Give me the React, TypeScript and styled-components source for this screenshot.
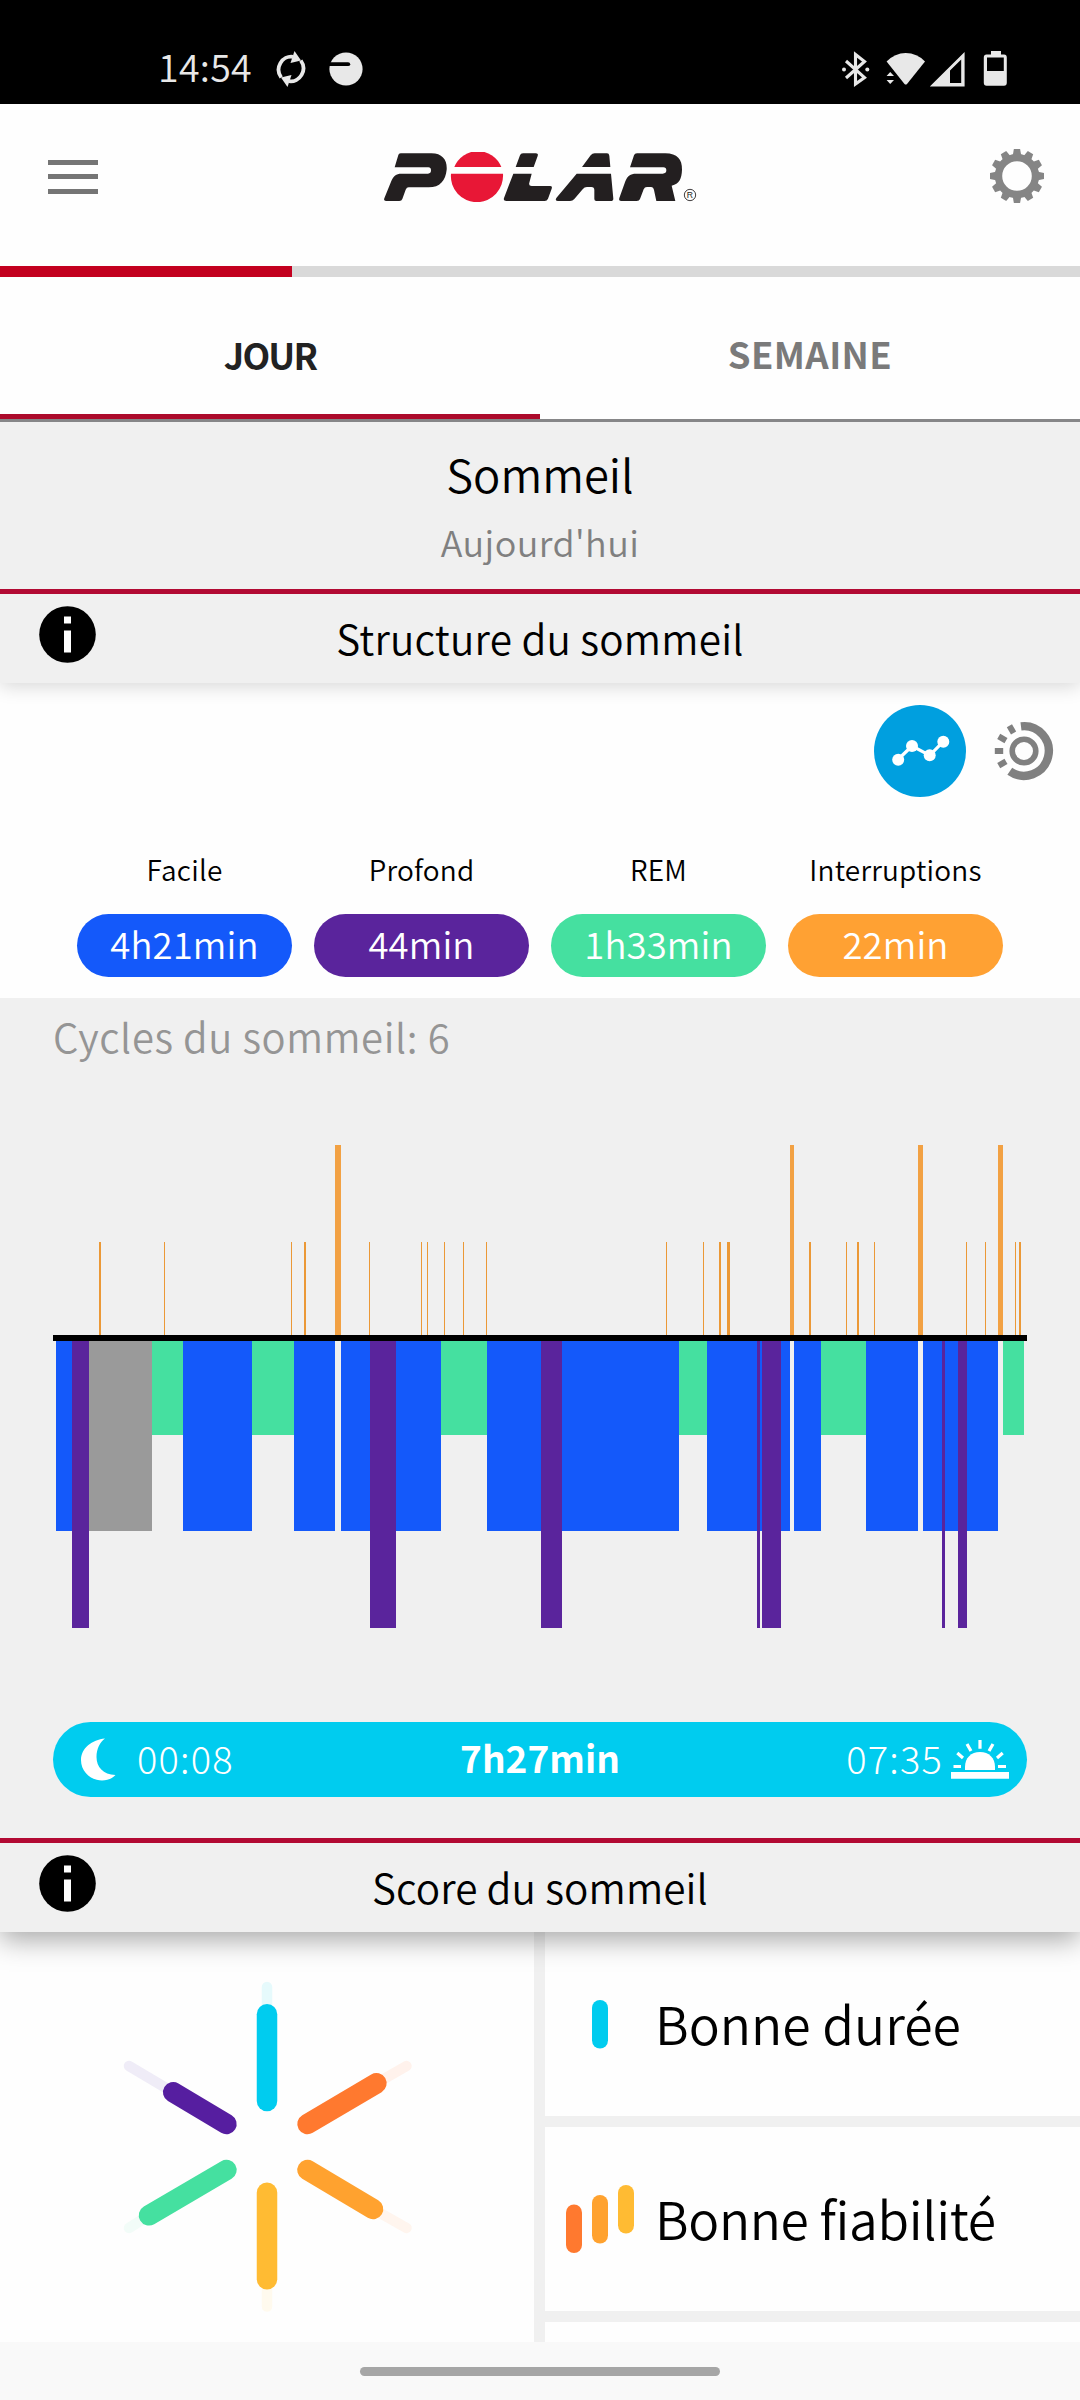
import React from "react";
import styled, { createGlobalStyle } from "styled-components";

const C = {
  blue: "#1459fa",
  purple: "#5a249c",
  green: "#45e0a0",
  orange: "#ffa133",
  amber: "#ffa22f",
  yellow: "#ffbb33",
  coral: "#ff792f",
  cyan: "#00ccef",
  gray: "#9a9a9a",
  panel: "#f0f0f0",
  crimson: "#b20a33",
};

const Global = createGlobalStyle`
  html, body { margin: 0; background: #fff; }
  body, button { font-family: "Noto Sans CJK JP", "Noto Sans CJK SC", "Noto Sans", sans-serif; }
  * { box-sizing: border-box; }
`;

const Screen = styled.div`
  width: 1080px;
  height: 2400px;
  overflow: hidden;
  display: flex;
  flex-direction: column;
  background: #fefefe;
  color: #000;
`;

const Txt = styled.span<{ $size: number; $color?: string; $weight?: number; $spacing?: number }>`
  font-size: ${(p) => p.$size}px;
  line-height: 1;
  color: ${(p) => p.$color ?? "#000"};
  font-weight: ${(p) => p.$weight ?? 350};
  letter-spacing: ${(p) => (p.$spacing ? `${p.$spacing}px` : "normal")};
  white-space: nowrap;
`;

const StatusBar = styled.header`
  height: 104px;
  flex: none;
  background: #000;
  display: flex;
  align-items: flex-start;
  justify-content: space-between;
  padding: 47px 70px 0 158px;
`;

const StatusGroup = styled.div`
  display: flex;
  align-items: center;
  height: 44px;
`;

const Clock = styled.div`
  width: 95px;
  display: flex;
  padding-bottom: 6px;
`;

const TopBar = styled.div`
  height: 162px;
  flex: none;
  display: flex;
  align-items: center;
  justify-content: space-between;
  padding: 0 36px 18px 48px;
`;

const MenuButton = styled.button`
  width: 50px;
  height: 34px;
  margin-top: 1px;
  padding: 0;
  border: 0;
  background: none;
  display: flex;
  flex-direction: column;
  justify-content: space-between;
`;

const MenuLine = styled.span`
  width: 100%;
  height: 5px;
  background: #757575;
`;

const Progress = styled.div`
  height: 11px;
  flex: none;
  background: #d9d9d9;
`;

const ProgressFill = styled.div`
  width: 292px;
  height: 100%;
  background: #c3001f;
`;

const Tabs = styled.nav`
  height: 145px;
  flex: none;
  display: grid;
  grid-template-columns: 1fr 1fr;
  border-bottom: 3px solid #868688;
`;

const Tab = styled.button<{ $active?: boolean }>`
  border: 0;
  border-bottom: 5px solid ${(p) => (p.$active ? "#ac0a2b" : "transparent")};
  background: none;
  padding: 18px 0 0;
  display: flex;
  justify-content: center;
`;

const TabInner = styled.div`
  height: 118px;
  display: flex;
  align-items: center;
`;

const TitleBlock = styled.section`
  height: 167px;
  flex: none;
  background: ${C.panel};
  display: flex;
  flex-direction: column;
  align-items: center;
  padding-top: 29px;
  gap: 27px;
`;

const SectionBar = styled.div<{ $shadow: string }>`
  height: 94px;
  flex: none;
  border-top: 5px solid ${C.crimson};
  background: ${C.panel};
  box-shadow: ${(p) => p.$shadow};
  clip-path: inset(0 0 -50px 0);
  position: relative;
  z-index: 1;
  display: grid;
  grid-template-columns: 160px 1fr 160px;
  padding-top: 12px;
`;

const InfoSlot = styled.div`
  padding-left: 39px;
`;

const SectionTitle = styled.div`
  display: flex;
  justify-content: center;
  padding-top: 12px;
`;

const Summary = styled.section`
  height: 315px;
  flex: none;
  display: flex;
  flex-direction: column;
  padding: 22px 26px 0 0;
`;

const ViewSwitch = styled.div`
  display: flex;
  justify-content: flex-end;
  align-items: center;
  gap: 28px;
  height: 92px;
`;

const RoundButton = styled.button`
  width: 92px;
  height: 92px;
  border: 0;
  padding: 0;
  border-radius: 50%;
  background: #009fdf;
`;

const Phases = styled.div`
  display: grid;
  grid-template-columns: repeat(4, 215px);
  column-gap: 22px;
  padding: 58px 0 0 77px;
`;

const Phase = styled.div`
  display: flex;
  flex-direction: column;
  align-items: center;
  gap: 31px;
`;

const Pill = styled.div<{ $bg: string }>`
  width: 215px;
  height: 63px;
  border-radius: 32px;
  background: ${(p) => p.$bg};
  display: flex;
  align-items: center;
  justify-content: center;
  padding-bottom: 2px;
`;

const Hypnogram = styled.section`
  height: 840px;
  flex: none;
  background: ${C.panel};
  padding: 18px 53px 0;
  display: flex;
  flex-direction: column;
`;

const ChartBox = styled.div`
  height: 500px;
  margin-top: 84px;
`;

const SleepSpan = styled.div`
  height: 75px;
  margin-top: 82px;
  border-radius: 38px;
  background: ${C.cyan};
  display: grid;
  grid-template-columns: 1fr auto 1fr;
  align-items: center;
  padding: 0 18px;
`;

const SpanSide = styled.div<{ $end?: boolean }>`
  display: flex;
  align-items: center;
  padding-left: ${(p) => (p.$end ? 0 : 9)}px;
  justify-content: ${(p) => (p.$end ? "flex-end" : "flex-start")};
`;

const SpanText = styled.div`
  display: flex;
  padding-bottom: 4px;
`;

const Score = styled.section`
  height: 410px;
  flex: none;
  overflow: hidden;
  background: ${C.panel};
  display: grid;
  grid-template-columns: 534px 1fr;
  column-gap: 11px;
`;

const StarCell = styled.div`
  background: #fefefe;
`;

const Rows = styled.div`
  display: flex;
  flex-direction: column;
  gap: 11px;
`;

const Row = styled.div<{ $h: number }>`
  height: ${(p) => p.$h}px;
  flex: none;
  background: #fefefe;
  display: flex;
  align-items: center;
  gap: 15px;
  padding-left: 17px;
`;

const RowText = styled.div`
  padding-bottom: 3px;
  display: flex;
`;

const NavArea = styled.footer`
  height: 58px;
  flex: none;
  background: #f9f9f9;
  display: flex;
  justify-content: center;
  padding-top: 25px;
`;

const Handle = styled.div`
  width: 360px;
  height: 9px;
  border-radius: 5px;
  background: #a6a6a6;
`;

const LogoWrap = styled.div`
  display: flex;
  margin-left: -6px;
  padding-top: 2px;
`;

const SyncIcon = () => (
  <svg width="32" height="36" viewBox="0 0 32 36">
    <g fill="none" stroke="#e8e8e8" strokeWidth="3.8">
      <path d="M6.2 26.5 A12.6 13 0 0 1 18 5.8" />
      <path d="M25.8 9.5 A12.6 13 0 0 1 14 30.2" />
    </g>
    <path d="M19.5 0 L26 9.5 L15.5 12 Z" fill="#e8e8e8" />
    <path d="M12.5 36 L6 26.5 L16.5 24 Z" fill="#e8e8e8" />
  </svg>
);

const WatchIcon = () => (
  <svg width="34" height="34" viewBox="0 0 34 34">
    <circle cx="17" cy="17" r="16.6" fill="#e8e8e8" />
    <path d="M0 10.3 H19 Q21.2 10.3 21.2 12.2 Q21.2 14.1 19 14.1 H0 Z" fill="#000" />
  </svg>
);

const StatusIcons = () => (
  <svg width="168" height="36" viewBox="842 51 168 36">
    <g fill="none" stroke="#e8e8e8" strokeWidth="3.1">
      <path d="M846 61 L864.5 77.5 L855.5 84 V54.5 L864.5 61.5 L846 78" />
    </g>
    <circle cx="844" cy="69.5" r="2" fill="#e8e8e8" />
    <circle cx="867.3" cy="69.5" r="2" fill="#e8e8e8" />
    <g fill="#e8e8e8">
      <path d="M886.6 61.5 Q895 53 905.7 53 Q917 53 925 61.5 L907 84 Q905.8 85 904.5 84 Z" />
      <path d="M886.6 76 L890.2 72 L894 76 Z M886.6 80 H894 L890.2 84 Z" />
      <path fillRule="evenodd" d="M929.8 86.5 L964.6 52 V86.5 Z M950 70.5 V83 H961.2 V59.5 Z" />
      <path
        fillRule="evenodd"
        d="M991 51 H1001 V54.4 H1004 Q1006.8 54.4 1006.8 57.4 V82.8 Q1006.8 85.8 1004 85.8 H986.6 Q983.8 85.8 983.8 82.8 V57.4 Q983.8 54.4 986.6 54.4 H991 Z M987 57.6 V71 H1003.8 V57.6 Z"
      />
    </g>
  </svg>
);

const Logo = () => (
  <svg width="314" height="50" viewBox="72 65 942 150">
    <g fill="#231f20">
      <path d="M118 69 H214 C248 69 262 90 260 118 C257 150 240 171 206 171 H146 Q140 171 137 178 L127 206 Q125 212 118 212 H78 Q70 212 73 204 L94 152 C101 136 108 130 124 130 H204 Q213 130 213 120 Q213 111 205 111 H104 L115 74 Q116 69 122 69 Z" />
      <path d="M489 69 H527 Q536 69 533 77 L521 110 H467 L480 75 Q482 69 489 69 Z" />
      <path d="M460 130 H515 L508 157 Q505 167 515 167 H570 Q578 167 575 175 L564 205 Q561 212 554 212 H439 Q429 212 432 203 Z" />
      <path d="M702 69 H741 Q747 69 748 76 L751 110 H666 L692 75 Q697 69 704 69 Z" />
      <path d="M650 130 H753 L760 205 Q760 212 752 212 H709 Q703 212 703 206 V180 Q703 170 694 170 H681 Q673 170 668 177 L643 206 Q638 212 630 212 H594 Q584 212 589 203 Z" />
      <path d="M830 69 H916 C952 69 967 88 966 118 C965 145 958 160 935 166 L946 212 H889 L882 179 Q880 170 873 170 H861 Q854 170 851 177 L840 206 Q838 212 830 212 H784 Q775 212 778 203 L796 153 C803 136 811 130 828 130 H908 Q919 130 919 120 Q919 111 910 111 H810 L822 75 Q824 69 831 69 Z" />
    </g>
    <g fill="#e81736">
      <path d="M283 110 A76 76 0 0 1 424 110 Z" />
      <path d="M273 130 H429 A78 80 0 0 1 351 215.5 A78 78 0 0 1 273 130 Z" />
    </g>
    <circle cx="990" cy="194" r="17" fill="none" stroke="#231f20" strokeWidth="2.6" />
    <text x="990" y="203.500" textAnchor="middle" fontSize="26" fontFamily="Liberation Sans, sans-serif" fill="#231f20">
      R
    </text>
  </svg>
);

const GearIcon = () => (
  <svg width="54" height="54" viewBox="-27 -27 54 54">
    <circle r="18.500" fill="none" stroke="#858585" strokeWidth="7.400" />
    {Array.from({ length: 12 }, (_, i) => (
      <path key={i} d="M-4.200 -21 L-3.100 -27 H3.100 L4.200 -21 Z" fill="#858585" transform={`rotate(${i * 30})`} />
    ))}
  </svg>
);

const InfoIcon = () => (
  <svg width="57" height="57" viewBox="0 0 57 57" style={{ display: "block" }}>
    <circle cx="28.500" cy="28.500" r="28.300" fill="#000" />
    <path d="M25 10.500 H32 V17.500 H25 Z M25 24.500 H32 V46.500 H25 Z" fill="#fff" />
  </svg>
);

const TrendIcon = () => (
  <svg width="92" height="92" viewBox="874 705 92 92" style={{ display: "block" }}>
    <path d="M898 759.500 L912 746 L929.700 755.300 L943.300 741.700" fill="none" stroke="#fff" strokeWidth="3.200" />
    {[[898.2, 759.7], [912, 746], [929.7, 755.3], [943.3, 741.7]].map(([x, y]) => (
      <circle key={x} cx={x} cy={y} r="6" fill="#fff" />
    ))}
  </svg>
);

const polar = (deg: number, r: number) => {
  const a = (deg * Math.PI) / 180;
  return `${(Math.sin(a) * r).toFixed(2)} ${(-Math.cos(a) * r).toFixed(2)}`;
};

const DialIcon = () => (
  <svg width="60" height="60" viewBox="-30 -30 60 60">
    <g fill="none" stroke="#808080">
      <circle r="11.800" strokeWidth="5.600" />
      <path d={`M${polar(-7, 24.8)} A24.800 24.800 0 1 1 ${polar(215, 24.8)}`} strokeWidth="8.400" />
    </g>
    {[240, 270, 300, 330].map((d) => (
      <rect key={d} x="-3" y="-29.200" width="6" height="8.400" fill="#808080" transform={`rotate(${d})`} />
    ))}
  </svg>
);

const MoonIcon = () => (
  <svg width="36" height="43" viewBox="0 0 36 43">
    <path d="M25 0.500 C12 2 1 10 1 22 C1 34 11 42.500 22 42.500 C28 42.500 33 40 35.500 37 C23 36.500 16.500 29 16.500 19 C16.500 11 20 4 25 0.500 Z" fill="#fff" />
  </svg>
);

const SunriseIcon = () => (
  <svg width="58" height="39" viewBox="0 0 58 39">
    <path d="M14 30 V27 C14 18 20 12 29 12 C38 12 44 18 44 27 V30 Z" fill="#fff" />
    <path d="M0 32 H58 V38.700 H0 Z" fill="#fff" />
    <g stroke="#fff" strokeWidth="3.200">
      <path d="M29 0 V8.700 M16 4 L20 11 M42 4 L38 11 M6.300 13 L12 18 M51.700 13 L46 18 M2.500 26.500 H10 M47 26.500 H55" />
    </g>
  </svg>
);

/* Sleep stages as [start, end, kind] along the time axis. */
const stages: [number, number, "light" | "deep" | "rem" | "gap"][] = [
  [56, 72, "light"], [89, 152, "gap"], [152, 183, "rem"], [183, 252, "light"], [252, 294, "rem"],
  [294, 335, "light"], [341, 441, "light"], [441, 487, "rem"], [487, 679, "light"],
  [679, 707, "rem"], [707, 790, "light"], [794, 821, "light"], [821, 866, "rem"],
  [866, 918, "light"], [923, 998, "light"], [1003, 1024, "rem"],
  [72, 89, "deep"], [370, 396, "deep"], [541, 562, "deep"], [757, 760, "deep"], [762, 781, "deep"],
  [942, 945, "deep"], [958, 967, "deep"],
];
const stageStyle = {
  light: { h: 189.5, c: C.blue },
  gap: { h: 189.5, c: C.gray },
  rem: { h: 94, c: C.green },
  deep: { h: 287, c: C.purple },
};
const shortWakes: [number, number][] = [
  [99, 2], [164, 1], [291, 1], [304, 2], [369, 1], [421, 1], [427, 1], [444, 1], [463, 1], [486, 1],
  [666, 1], [703, 1], [719, 2], [727, 3], [809, 2], [846, 1], [857, 2], [874, 1], [966, 1], [985, 1],
  [1015, 1], [1019, 2],
];
const longWakes: [number, number][] = [[335, 6], [790, 4], [918, 5], [998, 5]];

const Chart = () => (
  <svg width="974" height="500" viewBox="53 1140 974 500" style={{ display: "block" }} shapeRendering="crispEdges">
    {stages.map(([a, b, k], i) => (
      <rect key={i} x={a} y={1341} width={b - a} height={stageStyle[k].h} fill={stageStyle[k].c} />
    ))}
    {shortWakes.map(([x, w]) => (
      <rect key={x} x={x} y={1242} width={w} height={93} fill="#eb9836" />
    ))}
    {longWakes.map(([x, w]) => (
      <rect key={x} x={x} y={1145} width={w} height={190} fill="#f2a143" />
    ))}
    <rect x={53} y={1335} width={974} height={6} fill="#000" />
  </svg>
);

const rays = [
  { c: C.cyan, i: [267, 2101], o: [267, 2014.3], f: [267, 1987], faint: "#e6fafc" },
  { c: C.coral, i: [307.5, 2124], o: [376.4, 2083.3], f: [406.5, 2066], faint: "#fff2ec" },
  { c: C.amber, i: [307.5, 2170], o: [373, 2209], f: [406.5, 2228], faint: "#fff5ee" },
  { c: C.yellow, i: [267, 2192.7], o: [267, 2279.3], f: [267, 2306.5], faint: "#fffaee" },
  { c: C.green, i: [226.4, 2170], o: [149, 2215.3], f: [129, 2228], faint: "#f2fcf8" },
  { c: "#561ea0", i: [226.4, 2124], o: [173.2, 2092.3], f: [129, 2066], faint: "#efecf7" },
];

const Star = () => (
  <svg width="534" height="410" viewBox="0 1932 534 410" style={{ display: "block" }}>
    {rays.map((r) => (
      <g key={r.c} strokeLinecap="round">
        <line x1={r.o[0]} y1={r.o[1]} x2={r.f[0]} y2={r.f[1]} stroke={r.faint} strokeWidth="10.500" />
        <line x1={r.i[0]} y1={r.i[1]} x2={r.o[0]} y2={r.o[1]} stroke={r.c} strokeWidth="20.500" />
      </g>
    ))}
  </svg>
);

const Bars = ({ items }: { items: [number, number, string][] }) => (
  <svg width="78" height="70" viewBox="0 0 78 70">
    {items.map(([x, y, c]) => (
      <rect key={x} x={x} y={y} width="16" height="48.500" rx="8" fill={c} />
    ))}
  </svg>
);

const phases = [
  { label: "Facile", value: "4h21min", bg: C.blue },
  { label: "Profond", value: "44min", bg: C.purple },
  { label: "REM", value: "1h33min", bg: C.green },
  { label: "Interruptions", value: "22min", bg: C.orange },
];

const IconGap = styled.span<{ $w: number }>`
  width: ${(p) => p.$w}px;
`;

export default function App() {
  return (
    <Screen>
      <Global />
      <StatusBar>
        <StatusGroup>
          <Clock>
            <Txt $size={37.5} $color="#e8e8e8" $spacing={0.3}>14:54</Txt>
          </Clock>
          <IconGap $w={22} />
          <SyncIcon />
          <IconGap $w={22} />
          <WatchIcon />
        </StatusGroup>
        <StatusGroup>
          <StatusIcons />
        </StatusGroup>
      </StatusBar>

      <TopBar>
        <MenuButton aria-label="Menu">
          <MenuLine />
          <MenuLine />
          <MenuLine />
        </MenuButton>
        <LogoWrap>
          <Logo />
        </LogoWrap>
        <GearIcon />
      </TopBar>

      <Progress>
        <ProgressFill />
      </Progress>

      <Tabs>
        <Tab $active>
          <TabInner>
            <Txt $size={36} $weight={700} $spacing={-1.8} $color="#222">JOUR</Txt>
          </TabInner>
        </Tab>
        <Tab>
          <TabInner>
            <Txt $size={36.5} $weight={700} $spacing={0.4} $color="#7a7a7a">SEMAINE</Txt>
          </TabInner>
        </Tab>
      </Tabs>

      <TitleBlock>
        <Txt $size={45.4}>Sommeil</Txt>
        <Txt $size={36} $color="#808080" $spacing={0.4}>Aujourd'hui</Txt>
      </TitleBlock>

      <SectionBar $shadow="0 3px 18px rgba(0,0,0,0.16)">
        <InfoSlot>
          <InfoIcon />
        </InfoSlot>
        <SectionTitle>
          <Txt $size={40.5} $spacing={0.2}>Structure du sommeil</Txt>
        </SectionTitle>
      </SectionBar>

      <Summary>
        <ViewSwitch>
          <RoundButton aria-label="Courbe">
            <TrendIcon />
          </RoundButton>
          <DialIcon />
        </ViewSwitch>
        <Phases>
          {phases.map((p) => (
            <Phase key={p.label}>
              <Txt $size={28} $spacing={0.2}>{p.label}</Txt>
              <Pill $bg={p.bg}>
                <Txt $size={36.5} $color="#fff" $spacing={0.1}>{p.value}</Txt>
              </Pill>
            </Phase>
          ))}
        </Phases>
      </Summary>

      <Hypnogram>
        <Txt $size={40} $color="#959595" $spacing={0.6}>Cycles du sommeil: 6</Txt>
        <ChartBox>
          <Chart />
        </ChartBox>
        <SleepSpan>
          <SpanSide>
            <MoonIcon />
            <IconGap $w={21} />
            <SpanText>
              <Txt $size={38} $color="#fff" $weight={300} $spacing={1.2}>00:08</Txt>
            </SpanText>
          </SpanSide>
          <SpanText>
            <Txt $size={37} $color="#fff" $weight={700}>7h27min</Txt>
          </SpanText>
          <SpanSide $end>
            <SpanText>
              <Txt $size={38} $color="#fff" $weight={300} $spacing={1.2}>07:35</Txt>
            </SpanText>
            <IconGap $w={8} />
            <SunriseIcon />
          </SpanSide>
        </SleepSpan>
      </Hypnogram>

      <SectionBar $shadow="0 8px 26px rgba(0,0,0,0.34)">
        <InfoSlot>
          <InfoIcon />
        </InfoSlot>
        <SectionTitle>
          <Txt $size={40.5} $spacing={0.1}>Score du sommeil</Txt>
        </SectionTitle>
      </SectionBar>

      <Score>
        <StarCell>
          <Star />
        </StarCell>
        <Rows>
          <Row $h={184}>
            <Bars items={[[30, 11, C.cyan]]} />
            <RowText>
              <Txt $size={51.7}>Bonne durée</Txt>
            </RowText>
          </Row>
          <Row $h={184}>
            <Bars items={[[4, 20.5, C.coral], [30, 11, C.amber], [56, 1, C.yellow]]} />
            <RowText>
              <Txt $size={51.5} $spacing={-0.35}>Bonne fiabilité</Txt>
            </RowText>
          </Row>
          <Row $h={30} />
        </Rows>
      </Score>

      <NavArea>
        <Handle />
      </NavArea>
    </Screen>
  );
}
